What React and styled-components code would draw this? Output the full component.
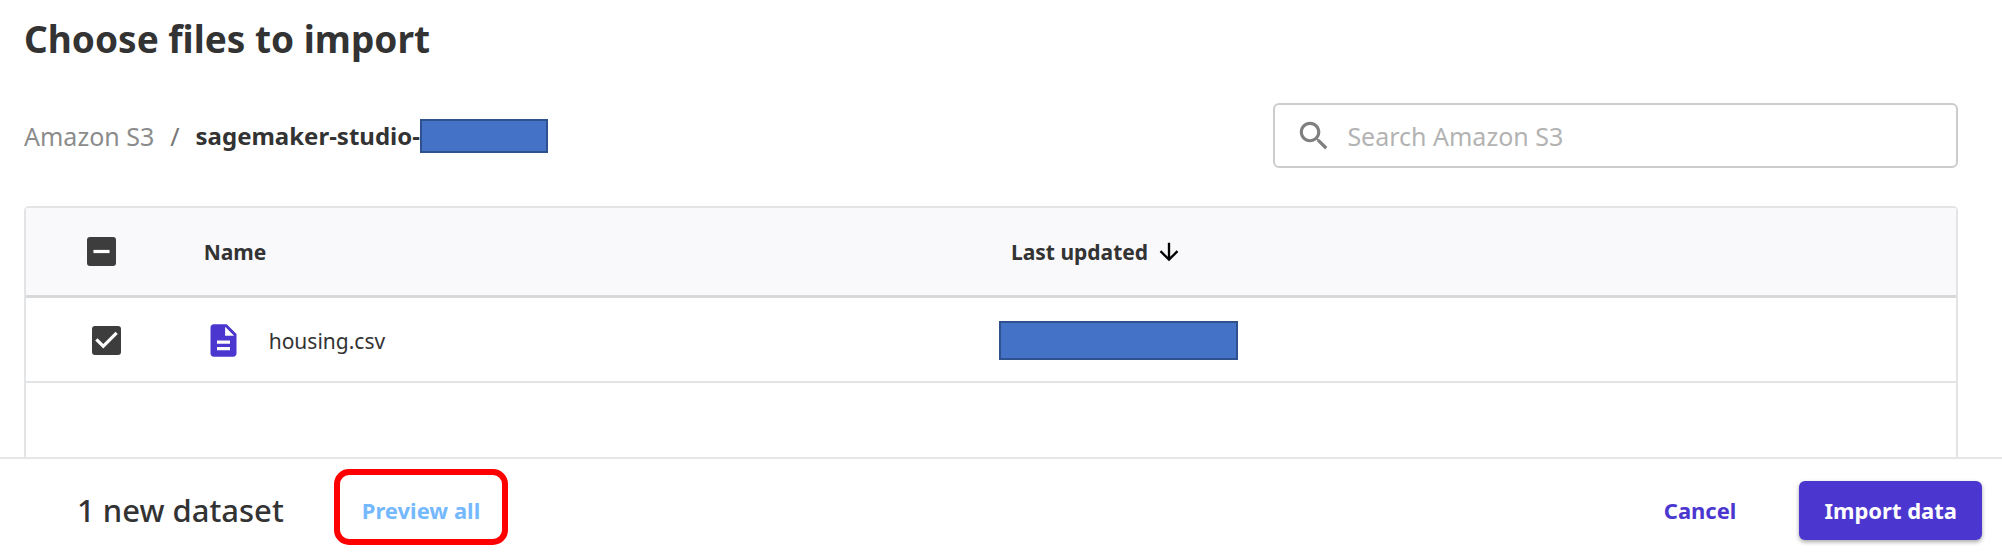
import React, { useEffect, useRef, useState } from "react";
import styled, { createGlobalStyle } from "styled-components";

const GlobalStyle = createGlobalStyle`
  *, *::before, *::after { box-sizing: border-box; }
  body {
    margin: 0;
    background: #fff;
    color: #333;
    font-family: "Noto Sans", sans-serif;
  }
  button, input { font-family: inherit; }
`;

const Page = styled.div`
  display: flex;
  flex-direction: column;
  min-height: 100vh;
`;

const Main = styled.main`
  flex: 1;
  display: flex;
  flex-direction: column;
  padding: 14px 44px 0 24px;
`;

const Title = styled.h1`
  margin: 0;
  font-size: 37px;
  line-height: 50px;
  font-weight: 700;
`;

const Toolbar = styled.div`
  display: flex;
  align-items: center;
  justify-content: space-between;
  margin: 39px 0 38px;
`;

const Breadcrumb = styled.nav`
  display: flex;
  align-items: center;
  font-size: 25px;
  line-height: 34px;
  white-space: nowrap;
`;

const CrumbLink = styled.a`
  color: #8c8c8c;
  text-decoration: none;
`;

const Separator = styled.span`
  margin: 0 16px;
  color: #757575;
`;

const Bucket = styled.strong`
  font-size: 24px;
  font-weight: 700;
`;

const Redaction = styled.span`
  display: block;
  width: ${(p) => p.$width}px;
  height: ${(p) => p.$height}px;
  background: #4472c6;
  border: 2px solid #2f528f;
`;

const SearchBox = styled.label`
  display: flex;
  align-items: center;
  gap: 14px;
  width: 35.4%;
  height: 65px;
  padding: 0 20px;
  border: 2px solid #ccc;
  border-radius: 6px;
  color: #808080;
`;

const SearchInput = styled.input`
  flex: 1;
  min-width: 0;
  padding: 0;
  border: 0;
  outline: 0;
  background: transparent;
  color: #333;
  font-size: 25px;
  line-height: 34px;
  &::placeholder { color: #b3b3b3; opacity: 1; }
`;

const Icon = styled.svg`
  display: block;
  flex: none;
  width: ${(p) => p.$size}px;
  height: ${(p) => p.$size}px;
  fill: currentColor;
`;

const Panel = styled.section`
  flex: 1;
  border: 2px solid #e3e4e6;
  border-bottom: 0;
  border-radius: 5px 5px 0 0;
`;

const Table = styled.table`
  width: 100%;
  table-layout: fixed;
  border-collapse: separate;
  border-spacing: 0;
  font-size: 21px;
  line-height: 28px;
  text-align: left;
`;

const HeadCell = styled.th`
  width: ${(p) => p.$width};
  height: 90px;
  padding: 0 0 0 ${(p) => p.$inset}px;
  background: #f9f9fb;
  border-bottom: 3px solid #d7d8da;
  font-weight: 700;
`;

const Cell = styled.td`
  height: 85px;
  padding: 2px 0 0 ${(p) => p.$inset}px;
  border-bottom: 2px solid #e3e4e6;
`;

const SortButton = styled.button`
  display: flex;
  align-items: center;
  gap: 7px;
  padding: 0;
  border: 0;
  background: none;
  color: inherit;
  font-size: 21px;
  line-height: 28px;
  font-weight: 700;
  svg { color: #000; }
`;

const FileName = styled.div`
  display: flex;
  align-items: center;
  gap: 26px;
  svg { color: #4b37d0; }
`;

const CheckWrap = styled.span`
  position: relative;
  display: block;
  width: 29px;
  height: 29px;
`;

const CheckInput = styled.input`
  appearance: none;
  display: block;
  width: 29px;
  height: 29px;
  margin: 0;
  border: 3px solid #3d3d3d;
  border-radius: 3px;
  &:checked, &:indeterminate { background: #3d3d3d; }
`;

const CheckMark = styled.svg`
  position: absolute;
  inset: 0;
  width: 29px;
  height: 29px;
  fill: #fff;
  pointer-events: none;
`;

const Footer = styled.footer`
  display: flex;
  align-items: center;
  justify-content: space-between;
  height: 103px;
  padding: 2px 20px 0 77px;
  border-top: 2px solid #e6e6e6;
  background: #fff;
`;

const Group = styled.div`
  display: flex;
  align-items: center;
  gap: ${(p) => p.$gap}px;
`;

const Summary = styled.span`
  padding-bottom: 2px;
  font-size: 31px;
  line-height: 42px;
  font-weight: 500;
`;

const Button = styled.button`
  height: 59px;
  padding: 0 8px 2px;
  border: 0;
  border-radius: 6px;
  background: none;
  color: ${(p) => p.$color};
  font-size: 22px;
  line-height: 28px;
  font-weight: 700;
  white-space: nowrap;
`;

const PrimaryButton = styled(Button)`
  padding: 0 25px 2px;
  background: #4b37d0;
  box-shadow: 0 2px 4px rgba(0, 0, 0, 0.35);
`;

const Highlight = styled.span`
  position: relative;
  &::after {
    content: "";
    position: absolute;
    inset: -12px -20px -5px;
    border: 6px solid #f00;
    border-radius: 15px;
    pointer-events: none;
  }
`;

const PATHS = {
  search:
    "M15.5 14h-.79l-.28-.27C15.41 12.59 16 11.11 16 9.5 16 5.91 13.09 3 9.5 3S3 5.91 3 9.5 5.91 16 9.5 16c1.61 0 3.09-.59 4.23-1.57l.27.28v.79l5 4.99L20.49 19l-4.99-5zm-6 0C7.01 14 5 11.99 5 9.5S7.01 5 9.5 5 14 7.01 14 9.5 11.99 14 9.5 14z",
  arrow: "M20 12l-1.41-1.41L13 16.17V4h-2v12.17l-5.58-5.59L4 12l8 8 8-8z",
  file:
    "M14 2H6c-1.1 0-1.99.9-1.99 2L4 20c0 1.1.89 2 1.99 2H18c1.1 0 2-.9 2-2V8l-6-6zm2 16H8v-2h8v2zm0-4H8v-2h8v2zm-3-5V3.5L18.5 9H13z",
  check: "M10 17l-5-5 1.41-1.41L10 14.17l7.59-7.59L19 8l-9 9z",
  minus: "M7 11h10v2H7z",
};

function Glyph({ name, size }) {
  return (
    <Icon $size={size} viewBox="0 0 24 24" aria-hidden="true">
      <path d={PATHS[name]} />
    </Icon>
  );
}

function Checkbox({ label, checked, indeterminate = false, onChange }) {
  const ref = useRef(null);
  useEffect(() => {
    ref.current.indeterminate = indeterminate;
  }, [indeterminate]);
  const mark = indeterminate ? "minus" : checked ? "check" : null;
  return (
    <CheckWrap>
      <CheckInput
        ref={ref}
        type="checkbox"
        aria-label={label}
        checked={checked}
        onChange={onChange}
      />
      {mark && (
        <CheckMark viewBox="3 3 18 18" aria-hidden="true">
          <path d={PATHS[mark]} />
        </CheckMark>
      )}
    </CheckWrap>
  );
}

export default function App() {
  const [selected, setSelected] = useState(true);
  const toggle = () => setSelected((s) => !s);

  return (
    <Page>
      <GlobalStyle />
      <Main>
        <Title>Choose files to import</Title>
        <Toolbar>
          <Breadcrumb aria-label="Breadcrumb">
            <CrumbLink href="#">Amazon S3</CrumbLink>
            <Separator>/</Separator>
            <Bucket>sagemaker-studio-</Bucket>
            <Redaction $width={128} $height={34} />
          </Breadcrumb>
          <SearchBox>
            <Glyph name="search" size={38} />
            <SearchInput
              type="text"
              aria-label="Search Amazon S3"
              placeholder="Search Amazon S3"
            />
          </SearchBox>
        </Toolbar>
        <Panel>
          <Table>
            <thead>
              <tr>
                <HeadCell $width="9%" $inset={61}>
                  <Checkbox
                    label="Select all files"
                    checked={false}
                    indeterminate={selected}
                    onChange={toggle}
                  />
                </HeadCell>
                <HeadCell $width="41%" $inset={4}>Name</HeadCell>
                <HeadCell $width="50%" $inset={20}>
                  <SortButton type="button">
                    Last updated
                    <Glyph name="arrow" size={28} />
                  </SortButton>
                </HeadCell>
              </tr>
            </thead>
            <tbody>
              <tr>
                <Cell $inset={66}>
                  <Checkbox label="Select housing.csv" checked={selected} onChange={toggle} />
                </Cell>
                <Cell $inset={4}>
                  <FileName>
                    <Glyph name="file" size={39} />
                    housing.csv
                  </FileName>
                </Cell>
                <Cell $inset={8}>
                  <Redaction $width={239} $height={39} />
                </Cell>
              </tr>
            </tbody>
          </Table>
        </Panel>
      </Main>
      <Footer>
        <Group $gap={70}>
          <Summary>1 new dataset</Summary>
          <Highlight>
            <Button type="button" $color="#74b9ff">Preview all</Button>
          </Highlight>
        </Group>
        <Group $gap={55}>
          <Button type="button" $color="#4b37d0">Cancel</Button>
          <PrimaryButton type="button" $color="#fff">Import data</PrimaryButton>
        </Group>
      </Footer>
    </Page>
  );
}
